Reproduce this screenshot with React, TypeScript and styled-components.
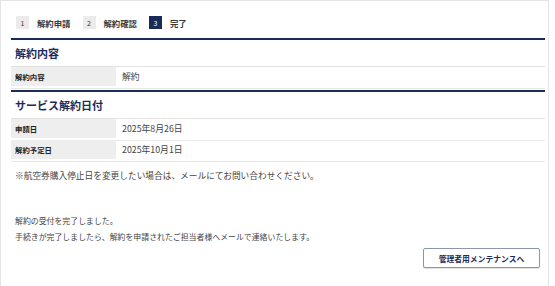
import styled, { createGlobalStyle } from 'styled-components';

const navy = '#1b2b58';

const GlobalStyle = createGlobalStyle`
    html, body {
        margin: 0;
        padding: 0;
        background: #ffffff;
        width: 555px;
        height: 286px;
        overflow: hidden;
    }
    body {
        font-family: "Noto Sans CJK JP", "Noto Sans", sans-serif;
        color: #333333;
    }
`;

const Card = styled.div`
    box-sizing: border-box;
    width: 549px;
    height: 296px;
    border: 1px solid #e4e4e4;
    padding: 14px 3px 0 10px;
`;

const Steps = styled.ol`
    list-style: none;
    margin: 0;
    padding: 0 0 0 5px;
    display: flex;
    align-items: center;
    gap: 12px;
    height: 15px;
`;

const Step = styled.li`
    display: flex;
    align-items: center;
    gap: 8px;
    font-size: 8.4px;
    font-weight: 700;
    color: #3a3a3a;
`;

const StepNo = styled.span<{ active?: boolean }>`
    width: 13px;
    height: 13px;
    display: flex;
    align-items: center;
    justify-content: center;
    font-size: 7px;
    font-weight: 400;
    background: ${props => (props.active ? navy : '#ebebeb')};
    color: ${props => (props.active ? '#ffffff' : '#333333')};
`;

const Section = styled.section`
    border-top: 2px solid ${navy};
`;

const FirstSection = styled(Section)`
    margin-top: 8px;
`;

const NextSection = styled(Section)`
    margin-top: 2px;
`;

const Heading = styled.h2`
    margin: 0;
    height: 26px;
    padding-left: 4px;
    display: flex;
    align-items: center;
    font-size: 11px;
    font-weight: 700;
    color: ${navy};
    border-bottom: 1px solid #e2e2e2;
`;

const Table = styled.div`
    display: flex;
    flex-direction: column;
`;

const Row = styled.div`
    display: grid;
    grid-template-columns: 105px 1fr;
    height: 19px;
    border-bottom: 2px solid #ffffff;
    box-shadow: 0 1px 0 #e8e8e8;
`;

const Label = styled.div`
    background: #eeeeee;
    display: flex;
    align-items: center;
    padding-left: 4px;
    font-size: 7.4px;
    font-weight: 700;
    color: #222222;
`;

const Value = styled.div`
    display: flex;
    align-items: center;
    padding-left: 6px;
    font-size: 8.8px;
    color: #444444;
`;

const Note = styled.p`
    margin: 8px 0 0 4px;
    font-size: 8.7px;
    color: #444444;
`;

const Message = styled.div`
    margin: 31px 0 0 4px;
    font-size: 7.9px;
    line-height: 16px;
    color: #444444;
`;

const Actions = styled.div`
    display: flex;
    justify-content: flex-end;
    padding-right: 5px;
    margin-top: 3px;
`;

const Button = styled.button`
    width: 117px;
    height: 20px;
    background: #ffffff;
    border: 1px solid #8a96ab;
    border-radius: 2px;
    box-shadow: 0 1px 1px rgba(0, 0, 0, 0.12);
    font-family: inherit;
    font-size: 7.8px;
    font-weight: 700;
    color: ${navy};
    cursor: pointer;
`;

const steps = ['解約申請', '解約確認', '完了'];

const App = () => {
    return (
        <>
            <GlobalStyle />
            <Card>
                <Steps>
                    {steps.map((label, index) => (
                        <Step key={index}>
                            <StepNo active={index === 2}>{index + 1}</StepNo>
                            {label}
                        </Step>
                    ))}
                </Steps>

                <FirstSection>
                    <Heading>解約内容</Heading>
                    <Table>
                        <Row>
                            <Label>解約内容</Label>
                            <Value>解約</Value>
                        </Row>
                    </Table>
                </FirstSection>

                <NextSection>
                    <Heading>サービス解約日付</Heading>
                    <Table>
                        <Row>
                            <Label>申請日</Label>
                            <Value>2025年8月26日</Value>
                        </Row>
                        <Row>
                            <Label>解約予定日</Label>
                            <Value>2025年10月1日</Value>
                        </Row>
                    </Table>
                </NextSection>

                <Note>※航空券購入停止日を変更したい場合は、メールにてお問い合わせください。</Note>

                <Message>
                    解約の受付を完了しました。<br />
                    手続きが完了しましたら、解約を申請されたご担当者様へメールで連絡いたします。
                </Message>

                <Actions>
                    <Button>管理者用メンテナンスへ</Button>
                </Actions>
            </Card>
        </>
    );
};

export default App;
